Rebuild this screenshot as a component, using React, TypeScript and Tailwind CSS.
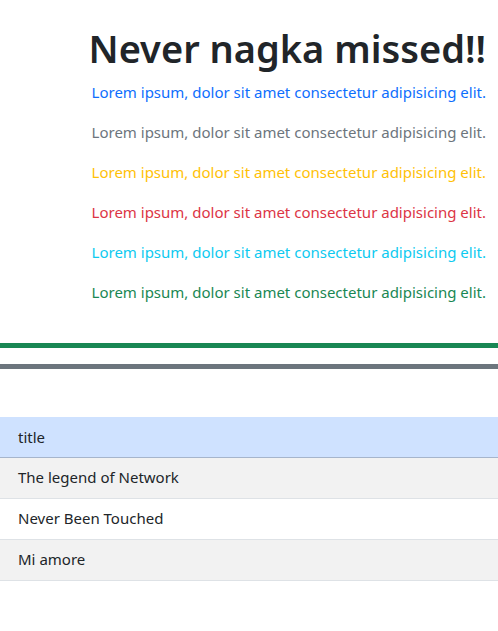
const lines = [
    "text-[#0d6efd]",
    "text-[#6c757d]",
    "text-[#ffc107]",
    "text-[#dc3545]",
    "text-[#0dcaf0]",
    "text-[#198754]",
];

const rows = ["The legend of Network", "Never Been Touched", "Mi amore"];

const App = () => {
    return (
        <div className="bg-white text-[#212529] text-[15px] font-['Noto_Sans',sans-serif]">
            <div className="pt-6 px-3 text-right">
                <h1 className="text-[38px] leading-[48px] font-semibold mb-2">Never nagka missed!!</h1>
                {lines.map((c, i) => (
                    <p key={i} className={`${c} leading-6 mb-4`}>
                        Lorem ipsum, dolor sit amet consectetur adipisicing elit.
                    </p>
                ))}
            </div>
            <div className="mt-[39px] h-[5px] bg-[#198754]" />
            <div className="mt-4 h-[5px] bg-[#6c757d]" />
            <table className="mt-12 w-full border-collapse">
                <thead>
                    <tr className="bg-[#cfe2ff] border-b border-[#a6b5cc]">
                        <td className="px-[18px] h-[40px] font-normal text-left">title</td>
                    </tr>
                </thead>
                <tbody>
                    {rows.map((r, i) => (
                        <tr key={r} className={`${i % 2 === 0 ? "bg-[#f2f2f2]" : "bg-white"} border-b border-[#dee2e6]`}>
                            <td className="px-[18px] h-[41px]">{r}</td>
                        </tr>
                    ))}
                </tbody>
            </table>
        </div>
    );
};

export default App;
